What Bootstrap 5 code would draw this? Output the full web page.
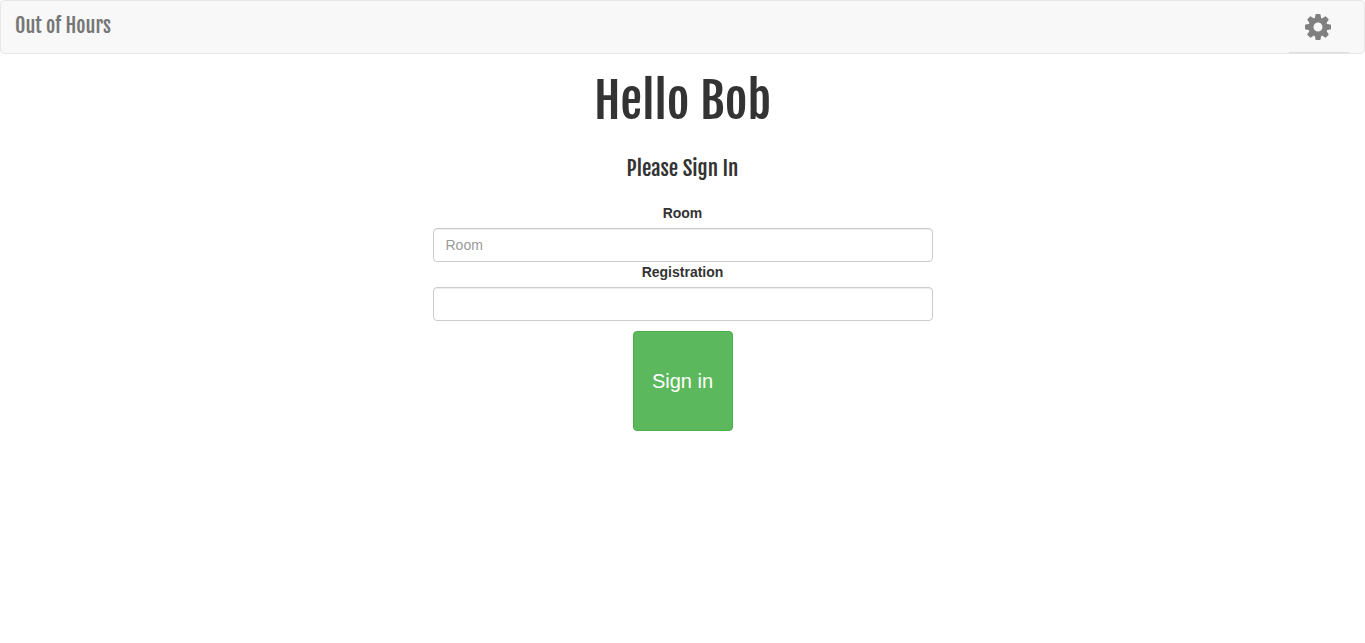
<!DOCTYPE html>
<html lang="en">
<head>
<meta charset="utf-8">
<meta name="viewport" content="width=device-width, initial-scale=1">
<title>Out of Hours</title>
<link href="https://cdn.jsdelivr.net/npm/bootstrap@5.3.0/dist/css/bootstrap.min.css" rel="stylesheet">
<style>
  body { font-family: "Liberation Sans", Arial, sans-serif; font-size: 14px; line-height: 20px; color: #333; }
  .display-face { font-family: "Fjalla One", "Liberation Sans Narrow", "Liberation Sans", sans-serif; font-weight: 400; }
  .topbar { background: #f8f8f8; border: 1px solid #e7e7e7; min-height: 54px; }
  .topbar .navbar-brand, .topbar .navbar-brand:hover { color: #777; font-size: 20px; line-height: 20px; }
  .topbar .navbar-brand { padding: 15px 14px; }
  .settings-btn { width: 60px; height: 52px; margin-right: 15px; color: #808080; border: 0; border-bottom: 1px solid #ddd; border-radius: 0; }
  .greeting { font-size: 49px; line-height: 54px; }
  .prompt { font-size: 21px; line-height: 24px; margin-bottom: 23px; }
  .sign-form { max-width: 500px; }
  .sign-form .form-label { margin-bottom: 5px; }
  .sign-form .form-control { height: 34px; font-size: 14px; line-height: 20px; color: #555; border-color: #ccc; border-radius: 4px; box-shadow: inset 0 1px 1px rgba(0, 0, 0, .075); }
  .sign-form .form-control::placeholder { color: #999; }
  .sign-btn { --bs-btn-color: #fff; --bs-btn-bg: #5cb85c; --bs-btn-border-color: #4cae4c; --bs-btn-hover-color: #fff; --bs-btn-hover-bg: #449d44; --bs-btn-hover-border-color: #398439; --bs-btn-border-radius: 4px; width: 100px; height: 100px; font-size: 20px; margin-top: 10px; }
</style>
</head>
<body>
<nav class="topbar navbar rounded-1 p-0 align-items-start">
  <div class="container-fluid flex-nowrap align-items-start ps-0 pe-0">
    <a class="navbar-brand display-face m-0" href="#">Out of Hours</a>
    <button class="settings-btn btn py-0 px-3 d-flex align-items-center" type="button" aria-label="Settings">
      <svg class="flex-shrink-0" width="26" height="26" viewBox="-13 -13 26 26" fill="currentColor" aria-hidden="true">
        <circle r="7" fill="none" stroke="currentColor" stroke-width="5"/>
        <path id="tooth" d="M-3.3-8 -2.5-12.4Q-2.4-13-1.8-13H1.8Q2.4-13 2.5-12.4L3.3-8Z"/>
        <use href="#tooth" transform="rotate(45)"/>
        <use href="#tooth" transform="rotate(90)"/>
        <use href="#tooth" transform="rotate(135)"/>
        <use href="#tooth" transform="rotate(180)"/>
        <use href="#tooth" transform="rotate(225)"/>
        <use href="#tooth" transform="rotate(270)"/>
        <use href="#tooth" transform="rotate(315)"/>
      </svg>
    </button>
  </div>
</nav>
<main class="container text-center pt-3">
  <h1 class="greeting display-face mt-1 mb-4">Hello Bob</h1>
  <h2 class="prompt display-face pt-1">Please Sign In</h2>
  <form class="sign-form mx-auto">
    <label class="form-label d-block fw-bold" for="room">Room</label>
    <input class="form-control" id="room" type="text" placeholder="Room">
    <label class="form-label d-block fw-bold" for="registration">Registration</label>
    <input class="form-control" id="registration" type="text">
    <button class="sign-btn btn p-0" type="submit">Sign in</button>
  </form>
</main>
<script src="https://cdn.jsdelivr.net/npm/bootstrap@5.3.0/dist/js/bootstrap.bundle.min.js"></script>
</body>
</html>
